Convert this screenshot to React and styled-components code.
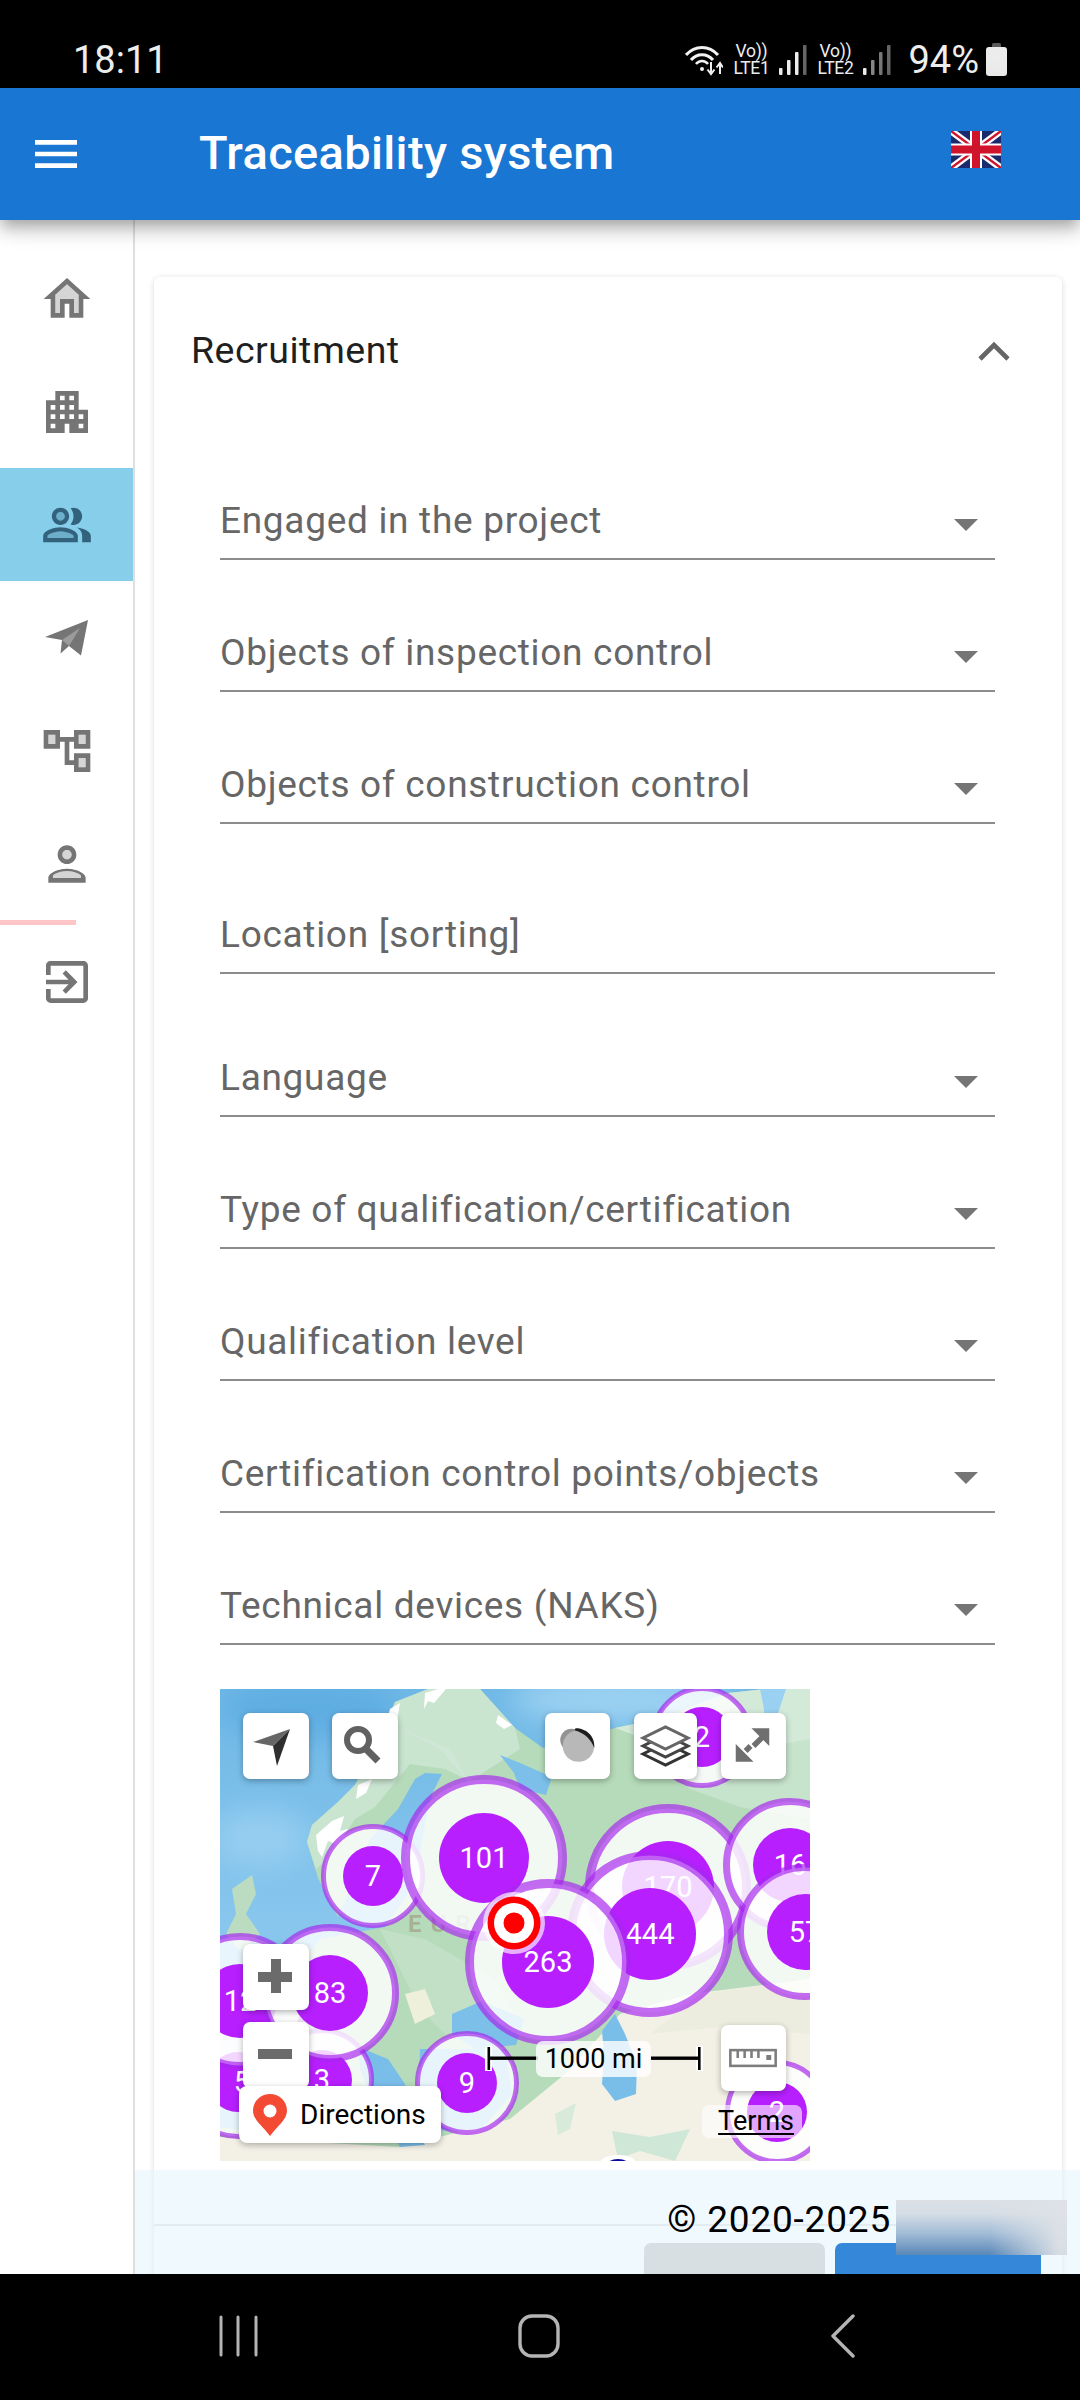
import React from "react";
import styled, { createGlobalStyle } from "styled-components";

const Global = createGlobalStyle`
  html, body { margin: 0; padding: 0; background: #fff; }
  * { box-sizing: border-box; }
  #root { width: 1080px; height: 2400px; }
`;

const Screen = styled.div`
  width: 1080px; height: 2400px; display: flex; flex-direction: column; overflow: hidden;
  font-family: Roboto, "Liberation Sans", sans-serif; background: #fff; color: #000;
`;

/* ---------- status bar ---------- */
const StatusBar = styled.div`
  height: 88px; flex: none; background: #000; color: #eee; display: flex; align-items: center;
  padding: 31px 73px 0 73px;
`;
const Clock = styled.span`font-size: 38px; line-height: 1; margin-right: auto;`;
const StatusGroup = styled.div`display: flex; align-items: center; gap: 9px;`;
const Lte = styled.div`
  display: flex; flex-direction: column; align-items: center; font-size: 17.5px; line-height: 17px; color: #eee; width: 38px;
  letter-spacing: -.3px;
`;
const Percent = styled.span`font-size: 38px; line-height: 1; margin-left: 8px; margin-right: -2px;`;

const Wifi = () => (
  <svg width="38" height="32" viewBox="0 0 38 32" fill="none" stroke="#f2f2f2">
    <path d="M1 11C10 1 24 1 33 11" strokeWidth="3" />
    <path d="M6 16C12 9 22 9 28 16" strokeWidth="3" />
    <path d="M11 20C14 16 20 16 23 20" strokeWidth="2.5" />
    <circle cx="17" cy="25" r="2" fill="#f2f2f2" stroke="none" />
    <path d="M26 18V29M22.5 25.5L26 30L29.5 25.5M35 30V19M31.5 23.5L35 19L38 23.5" strokeWidth="2" />
  </svg>
);
const Signal = ({ colors }) => (
  <svg width="28" height="30" viewBox="0 0 28 30">
    <rect x="0" y="23" width="3.5" height="7" rx="1" fill={colors[0]} />
    <rect x="8" y="15" width="3.5" height="15" rx="1" fill={colors[1]} />
    <rect x="16" y="7" width="3.5" height="23" rx="1" fill={colors[2]} />
    <rect x="24" y="0" width="3.5" height="30" rx="1" fill={colors[3]} />
  </svg>
);
const Battery = () => (
  <svg width="21" height="33" viewBox="0 0 21 33">
    <rect x="6" y="0" width="9" height="6" rx="1.5" fill="#5a5a5a" />
    <rect x="0" y="4" width="21" height="29" rx="3" fill="#ececec" />
  </svg>
);

/* ---------- app bar ---------- */
const AppBar = styled.header`
  height: 132px; flex: none; background: #1976d2; display: flex; align-items: center; color: #fff;
  padding: 0 0 0 28px; position: relative; z-index: 3;
  box-shadow: 0 6px 12px -3px rgba(0,0,0,.2), 0 12px 15px 0 rgba(0,0,0,.14), 0 3px 30px 0 rgba(0,0,0,.12);
`;
const Title = styled.h1`
  margin: -3px 0 0 115px; font-size: 47px; font-weight: 500; line-height: 1; letter-spacing: .34px; flex: 1;
`;
const FlagWrap = styled.div`margin-right: 79px; display: flex; margin-top: -10px;`;

const Flag = () => (
  <svg width="50" height="37" viewBox="0 0 50 37">
    <rect width="50" height="37" fill="#1a2a6c" />
    <path d="M0 0L50 37M50 0L0 37" stroke="#fff" strokeWidth="7" />
    <path d="M0 0L50 37M50 0L0 37" stroke="#cf142b" strokeWidth="2.4" />
    <rect x="19" width="12" height="37" fill="#fff" />
    <rect y="12.5" width="50" height="12" fill="#fff" />
    <rect x="21" width="8" height="37" fill="#cf142b" />
    <rect y="14.5" width="50" height="8" fill="#cf142b" />
  </svg>
);

/* ---------- body ---------- */
const Body = styled.div`flex: 1; display: flex; position: relative; min-height: 0; overflow: hidden;`;
const Sidebar = styled.nav`
  width: 135px; flex: none; border-right: 2px solid #dfdfdf; padding-top: 22px; display: flex; flex-direction: column;
`;
const NavItem = styled.div`
  height: 113px; display: flex; align-items: center; justify-content: center;
  background: ${p => (p.$active ? "#87ceeb" : "transparent")};
  color: ${p => (p.$active ? "#33627d" : "#757575")};
`;
const NavDivider = styled.div`width: 76px; height: 5px; background: #fdc5c5; flex: none;`;
const Main = styled.main`flex: 1; min-width: 0; padding: 57px 18px 0 19px;`;
const Card = styled.section`
  background: #fff; border-radius: 6px; min-height: 2100px;
  box-shadow: 0 3px 3px -2px rgba(0,0,0,.12), 0 1px 6px 0 rgba(0,0,0,.14);
  padding: 0 0 0 66px;
`;
const CardHead = styled.div`
  height: 148px; margin-left: -28px; padding: 0 50px 0 0; display: flex; align-items: center; justify-content: space-between;
`;
const CardTitle = styled.span`font-size: 37.5px; line-height: 1; color: #1f1f1f; letter-spacing: .5px; margin: 0 0 0 -1px;`;
const Fields = styled.div`width: 775px; display: flex; flex-direction: column;`;
const Field = styled.div`
  height: ${p => p.$h}px; flex: none; border-bottom: 2px solid #8c8c8c; display: flex; align-items: flex-end;
  justify-content: space-between; padding: 0 17px 17px 0;
`;
const FieldLabel = styled.span`font-size: 37px; line-height: 40px; color: #666; letter-spacing: .7px;`;
const Caret = styled.span`
  width: 0; height: 0; border-left: 12px solid transparent; border-right: 12px solid transparent;
  border-top: 12px solid #757575; margin-bottom: 10px;
`;

/* ---------- map ---------- */
const MapBox = styled.div`
  width: 590px; height: 472px; margin-top: 44px; position: relative; overflow: hidden; background: #7cc0ea;
`;
const MapSvg = styled.svg`display: block; position: absolute; inset: 0;`;
const MapButton = styled.div`
  position: absolute; left: ${p => p.$x}px; top: ${p => p.$y}px; width: ${p => p.$w || 66}px; height: 66px;
  background: #fff; border-radius: 7px; display: flex; align-items: center; justify-content: center;
  box-shadow: 0 2px 6px rgba(0,0,0,.3);
`;
const Directions = styled.div`
  position: absolute; left: 19px; top: 397px; width: 202px; height: 57px; background: #fff; border-radius: 8px;
  box-shadow: 0 2px 6px rgba(0,0,0,.3); display: flex; align-items: center; gap: 13px; padding-left: 14px;
  font-size: 28px; color: #000;
`;
const ScaleLabel = styled.div`
  position: absolute; left: 316px; top: 352px; width: 115px; height: 36px; background: rgba(255,255,255,.8);
  border-radius: 7px; font-size: 27px; line-height: 36px; text-align: center; color: #000;
`;
const Terms = styled.div`
  position: absolute; left: 482px; top: 416px; width: 100px; height: 33px; background: rgba(255,255,255,.6);
  border-radius: 7px; font-size: 27px; line-height: 33px; text-align: right; padding-right: 8px; color: #000;
  text-decoration: underline; text-underline-offset: 3px;
`;
const CardDivider = styled.div`height: 2px; background: #e4e4e4; margin: 63px 0 0 -66px;`;

/* ---------- footer overlay ---------- */
const Footer = styled.div`
  position: absolute; left: 135px; right: 0; bottom: 0; height: 104px; background: rgba(226,243,252,.5);
  padding: 30px 0 0 0; display: flex; flex-direction: column; align-items: flex-end;
`;
const CopyRow = styled.div`display: flex; height: 43px; gap: 5px; padding-right: 13px; position: relative; z-index: 1;`;
const Copy = styled.span`font-size: 37px; line-height: 40px; letter-spacing: .8px; color: #000;`;
const BlurBox = styled.div`
  width: 171px; height: 55px;
  background: linear-gradient(90deg, rgba(222,226,231,0) 55%, rgba(222,226,231,.95) 95%),
    linear-gradient(180deg, #dadfe5 0%, #d5dde5 25%, #a3bdd7 60%, #5a87b7 100%);
`;
const Buttons = styled.div`display: flex; gap: 10px; padding-right: 39px;`;
const FootButton = styled.div`
  height: 78px; width: ${p => p.$w}px; border-radius: 7px 7px 0 0; background: ${p => p.$bg}; color: ${p => p.$fg};
  font-size: 28px; font-weight: 500; letter-spacing: 2px; text-align: center; line-height: 86px;
`;

/* ---------- nav bar ---------- */
const NavBar = styled.div`
  height: 126px; flex: none; background: #000; display: flex; align-items: center; position: relative; z-index: 4;
  padding: 0 0 2px 219px;
`;
const NavGlyph = styled.span`display: flex; margin-left: ${p => p.$ml || 0}px;`;

const Icon = ({ size = 56, children }) => (
  <svg width={size} height={size} viewBox="0 0 24 24" fill="currentColor">{children}</svg>
);
const HomeI = () => (
  <Icon>
    <path d="m12 5.69 5 4.5V18h-2v-6H9v6H7v-7.81z" opacity=".3" />
    <path d="m12 3-10 9h3v8h6v-6h2v6h6v-8h3zm5 15h-2v-6H9v6H7v-7.81l5-4.5 5 4.5z" />
  </Icon>
);
const ApartmentI = () => (
  <Icon>
    <path d="M17 11V3H7v4H3v14h8v-4h2v4h8V11h-4zM7 19H5v-2h2v2zm0-4H5v-2h2v2zm0-4H5V9h2v2zm4 4H9v-2h2v2zm0-4H9V9h2v2zm0-4H9V5h2v2zm4 8h-2v-2h2v2zm0-4h-2V9h2v2zm0-4h-2V5h2v2zm4 12h-2v-2h2v2zm0-4h-2v-2h2v2z" />
  </Icon>
);
const PeopleI = () => (
  <Icon size={52}>
    <circle cx="9" cy="8" r="2" opacity=".3" />
    <path d="M9 15c-2.7 0-5.8 1.29-6 2.01V18h12v-1c-.2-.71-3.3-2-6-2z" opacity=".3" />
    <path d="M16.67 13.13C18.04 14.06 19 15.32 19 17v3h4v-3c0-2.18-3.57-3.47-6.33-3.87zM15 12c2.21 0 4-1.79 4-4s-1.79-4-4-4c-.47 0-.91.1-1.33.24C14.5 5.27 15 6.58 15 8s-.5 2.73-1.33 3.76c.42.14.86.24 1.33.24zm-6 0c2.21 0 4-1.79 4-4s-1.79-4-4-4-4 1.79-4 4 1.79 4 4 4zm0-6c1.1 0 2 .9 2 2s-.9 2-2 2-2-.9-2-2 .9-2 2-2zm0 7c-2.67 0-8 1.34-8 4v3h16v-3c0-2.66-5.33-4-8-4zm6 5H3v-.99C3.2 16.29 6.3 15 9 15s5.8 1.29 6 2v1z" />
  </Icon>
);
const PlaneI = () => (
  <svg width="46" height="38" viewBox="0 0 46 38" fill="currentColor">
    <path d="M44 1L1 18L18 21L16.5 34.5L25 27L37 36.5Z" />
    <path d="M18 21L36 9L25 27Z" fill="#fff" opacity=".28" />
  </svg>
);
const TreeI = () => (
  <Icon>
    <path d="M7 5v4H4V5h3m13 0v4h-3V5h3m0 10v4h-3v-4h3" opacity=".3" />
    <path d="M22 11V3h-7v3H9V3H2v8h7V8h2v10h4v3h7v-8h-7v3h-2V8h2v3h7zM7 9H4V5h3v4zm10 6h3v4h-3v-4zm0-10h3v4h-3V5z" />
  </Icon>
);
const PersonI = () => (
  <Icon>
    <circle cx="12" cy="8" r="2" opacity=".3" />
    <path d="M12 15c-2.7 0-5.8 1.29-6 2.01V18h12v-1c-.2-.71-3.3-2-6-2z" opacity=".3" />
    <path d="M12 14c-2.67 0-8 1.34-8 4v2h16v-2c0-2.66-5.33-4-8-4zm6 4H6v-.99c.2-.72 3.3-2.01 6-2.01s5.8 1.29 6 2v1zM12 4C9.79 4 8 5.79 8 8s1.79 4 4 4 4-1.79 4-4-1.79-4-4-4zm0 6c-1.1 0-2-.9-2-2s.9-2 2-2 2 .9 2 2-.9 2-2 2z" />
  </Icon>
);
const ExitI = () => (
  <Icon>
    <path d="M10.09 15.59 11.5 17l5-5-5-5-1.41 1.41L12.67 11H3v2h9.67l-2.58 2.59zM19 3H5c-1.11 0-2 .9-2 2v4h2V5h14v14H5v-4H3v4c0 1.1.89 2 2 2h14c1.1 0 2-.9 2-2V5c0-1.1-.9-2-2-2z" />
  </Icon>
);

/* ---------- map drawing ---------- */
const clusters = [
  { l: "5", x: 18, y: 393, r: 30, R: 57, w: 5, tx: 4 },
  { l: "3", x: 102, y: 391, r: 30, R: 52, w: 5, tx: 0 },
  { l: "12", x: 20, y: 312, r: 37, R: 68, w: 7, tx: 0 },
  { l: "83", x: 110, y: 304, r: 38, R: 69, w: 7, tx: 0 },
  { l: "7", x: 153, y: 187, r: 30, R: 52, w: 5, tx: 0 },
  { l: "9", x: 247, y: 394, r: 30, R: 52, w: 5, tx: 0 },
  { l: "2", x: 482, y: 48, r: 30, R: 51, w: 5, tx: 0 },
  { l: "2", x: 557, y: 423, r: 30, R: 52, w: 5, tx: 0 },
  { l: "101", x: 264, y: 169, r: 45, R: 83, w: 9, tx: 0 },
  { l: "170", x: 448, y: 198, r: 46, R: 83, w: 9, tx: 0 },
  { l: "16", x: 570, y: 176, r: 37, R: 67, w: 7, tx: 0 },
  { l: "57", x: 585, y: 243, r: 38, R: 68, w: 7, tx: 0 },
  { l: "444", x: 430, y: 245, r: 46, R: 83, w: 9, tx: 0 },
  { l: "263", x: 328, y: 273, r: 46, R: 83, w: 9, tx: 0 },
];

const Cluster = ({ c }) => (
  <g>
    <circle cx={c.x} cy={c.y} r={c.R - c.w / 2} fill="#fff" fillOpacity=".82" stroke="#a726ee" strokeOpacity=".68" strokeWidth={c.w} />
    <circle cx={c.x} cy={c.y} r={c.r} fill="#b71fff" />
    <text x={c.x + c.tx} y={c.y + 10} textAnchor="middle" fontFamily="Roboto, sans-serif" fontSize="29" fill="#fff">{c.l}</text>
  </g>
);

const MapDrawing = () => (
  <MapSvg width="590" height="472" viewBox="0 0 590 472">
    <defs>
      <linearGradient id="sea" x1="0" y1="0" x2="0" y2="1">
        <stop offset="0" stopColor="#6fb8e6" />
        <stop offset=".5" stopColor="#88c6ed" />
        <stop offset="1" stopColor="#7cbfea" />
      </linearGradient>
      <filter id="soft"><feGaussianBlur stdDeviation=".7" /></filter>
      <filter id="softer"><feGaussianBlur stdDeviation="14" /></filter>
    </defs>
    <rect width="590" height="472" fill="url(#sea)" />
    <g filter="url(#softer)">
      <ellipse cx="90" cy="20" rx="90" ry="30" fill="#5fade2" />
      <ellipse cx="40" cy="150" rx="50" ry="30" fill="#94cdf0" />
      <ellipse cx="400" cy="10" rx="110" ry="24" fill="#9cd2f2" />
    </g>
    <g filter="url(#soft)">
      {/* main land */}
      <path fill="#b6dbba" d="M208,0 L175,13 L160,50 L135,96 L118,113 L92,136 L87,153 L98,189 L118,228 L128,205 L150,150 L178,120 L195,90 L205,84 L222,85 L212,105 L205,135 L195,195 L165,238 L100,250 L70,290 L60,340 L40,380 L0,400 L0,472 L590,472 L590,0 L545,0 L508,4 L442,29 L395,39 L323,59 L295,39 L260,0 Z" />
      {/* lighter northern land */}
      <path fill="#c9e5d0" d="M208,0 L175,13 L160,50 L135,96 L118,113 L92,136 L87,153 L96,180 L112,165 L135,130 L155,118 L190,75 L225,80 L250,92 L300,60 L295,39 L260,0Z" />
      <path fill="#c6e3cc" d="M440,70 L590,44 L590,130 L520,118 L470,100Z" />
      <path fill="#d3ead9" d="M442,29 L508,4 L545,0 L590,0 L590,50 L480,70 L395,39Z" />
      {/* snow */}
      <path fill="#fff" d="M96,146 L112,132 L124,127 L120,142 L128,140 L118,156 L108,152 L102,168 L98,162Z" />
      <path fill="#fff" d="M205,4 L218,0 L226,0 L214,14 L208,12 L204,20Z" />
      <path fill="#fff" d="M170,20 L180,14 L177,32 L170,42 L166,36Z" />
      <path fill="#fff" d="M138,96 L152,90 L146,104 L136,110Z" />
      <path fill="#fff" d="M278,26 L292,36 L284,40 L276,34Z" />
      {/* White sea */}
      <path fill="#7cc0ea" d="M280,66 L300,74 L332,88 L326,106 L300,100 L294,84Z" />
      {/* Ob gulf */}
      <path fill="#9ad0f1" d="M540,0 L566,0 L556,30 L545,40 L544,20Z" />
      {/* UK */}
      <path fill="#bbdcc0" d="M12,200 L32,186 L36,205 L26,225 L40,245 L20,262 L6,245 L16,225Z" />
      {/* south */}
      <path fill="#f3f1e6" d="M590,290 L470,305 L400,325 L345,385 L290,430 L180,458 L0,448 L0,472 L590,472Z" />
      <path fill="#ecedde" d="M590,290 L480,305 L430,345 L500,338 L590,345Z" />
      <path fill="#cfe7d6" d="M392,442 L430,448 L470,440 L455,472 L420,462 L398,470Z" />
      <path fill="#d8ead9" d="M335,425 L356,414 L350,440 L338,446Z" />
      <path fill="#cfe7d6" d="M180,40 L230,60 L250,95 L220,60Z" />
      <path fill="#c9e3cf" d="M160,240 L200,320 L225,345 L300,335 L275,290 L205,250Z" opacity=".6" />
      <path fill="#eef0dc" d="M185,305 L205,300 L215,325 L195,335Z" />
      {/* inland water */}
      <path fill="#79bde9" d="M138,358 L168,370 L185,395 L192,430 L170,428 L150,405 L140,380Z" />
      <path fill="#7cc0ea" d="M232,325 L262,312 L304,330 L296,356 L255,360 L232,345Z" />
      <path fill="#79bde9" d="M382,342 L395,325 L405,345 L417,375 L416,405 L395,412 L382,395 L384,365Z" />
      <path fill="#7cc0ea" d="M170,440 L195,438 L205,456 L180,458Z" />
      <path fill="#7cc0ea" d="M0,405 L40,395 L58,420 L30,442 L0,438Z" />
      <path fill="#7cc0ea" d="M200,360 L285,360 L292,405 L262,440 L215,442 L198,420Z" />
    </g>
    <ellipse cx="398" cy="474" rx="18" ry="8" fill="#fff" />
    <ellipse cx="398" cy="477" rx="12" ry="7" fill="#0a0aa0" />
    <text x="188" y="243" fontFamily="Roboto, sans-serif" fontSize="24" fontWeight="700" letterSpacing="9" fill="#9a8f78" opacity=".55">EUROPE</text>
    {clusters.map(c => <Cluster key={c.l + c.x} c={c} />)}
    {/* target */}
    <circle cx="294" cy="234" r="31" fill="#fff" opacity=".65" />
    <circle cx="294" cy="234" r="26.5" fill="#f00" />
    <circle cx="294" cy="234" r="20" fill="#fff" />
    <circle cx="294" cy="234" r="10.5" fill="#f00" />
    {/* scale bar */}
    <rect x="265" y="357" width="7" height="25" fill="#fff" />
    <rect x="476" y="357" width="7" height="25" fill="#fff" opacity=".9" />
    <rect x="267.5" y="358" width="2.6" height="23" fill="#000" />
    <rect x="478" y="358" width="2.6" height="23" fill="#000" />
    <rect x="268" y="367.5" width="50" height="3.4" fill="#000" />
    <rect x="431" y="367.5" width="48" height="3.4" fill="#000" />
  </MapSvg>
);

const NavArrow = () => (
  <svg width="66" height="66" viewBox="0 0 66 66">
    <path d="M47 16L10 29L30 33Z" fill="#666" />
    <path d="M47 16L30 33L34 53Z" fill="#2f2f2f" />
  </svg>
);
const SearchI = () => (
  <svg width="66" height="66" viewBox="0 0 66 66" fill="none" stroke="#616161">
    <circle cx="26" cy="27" r="11" strokeWidth="6" />
    <path d="M34 36L46 48" strokeWidth="7" />
  </svg>
);
const DarkI = () => (
  <svg width="66" height="66" viewBox="0 0 66 66">
    <circle cx="27" cy="27" r="11.5" fill="#929292" />
    <circle cx="34" cy="33" r="16" fill="#b8b8b8" />
    <path d="M31 15C42 15 51 23 50 35C47 27 41 20 30 17Z" fill="#1d1d1d" />
  </svg>
);
const LayersI = () => (
  <svg width="63" height="66" viewBox="0 0 63 66" fill="none">
    <path d="M9 41L31.5 52L54 41L31.5 30Z" stroke="#333" strokeWidth="3" />
    <path d="M9 33L31.5 44L54 33L31.5 22Z" fill="#fff" stroke="#444" strokeWidth="3" />
    <path d="M9 25L31.5 36L54 25L31.5 14Z" fill="#fff" stroke="#666" strokeWidth="3" />
  </svg>
);
const ExpandI = () => (
  <svg width="66" height="66" viewBox="0 0 66 66" fill="#6f6f6f">
    <path d="M31 15H49V33Z" />
    <path d="M15 31V49H33Z" />
    <path d="M39 22L43 26L34 35L30 31ZM27 31L31 35L26 40L22 36Z" transform="translate(1 0)" />
  </svg>
);
const PlusI = () => (
  <svg width="66" height="66" viewBox="0 0 66 66" fill="#6b6b6b"><path d="M28 15H38V28H49V38H38V49H28V38H15V28H28Z" /></svg>
);
const MinusI = () => (
  <svg width="66" height="66" viewBox="0 0 66 66" fill="#6b6b6b"><rect x="15" y="27" width="34" height="10" /></svg>
);
const RulerI = () => (
  <svg width="66" height="66" viewBox="0 0 66 66" fill="none" stroke="#7d7d7d">
    <rect x="9.5" y="25" width="46" height="16" strokeWidth="2.6" />
    <path d="M17 25V33M24 25V33M31 25V33M38 25V33" strokeWidth="2.6" />
    <rect x="46" y="30" width="5" height="5" fill="#7d7d7d" stroke="none" />
  </svg>
);
const Pin = () => (
  <svg width="34" height="42" viewBox="0 0 34 42">
    <path d="M17 0C7.6 0 0 7.4 0 16.5C0 26 9 31 17 42C25 31 34 26 34 16.5C34 7.4 26.4 0 17 0Z" fill="#f24a33" />
    <circle cx="17" cy="17" r="6.5" fill="#fff" />
  </svg>
);

/* ---------- nav bar glyphs ---------- */
const Recents = () => (
  <svg width="40" height="42" viewBox="0 0 40 42" stroke="#b4b4b4" strokeWidth="3" strokeLinecap="round">
    <path d="M2 2V40M19 2V40M37 2V40" />
  </svg>
);
const HomeGlyph = () => (
  <svg width="42" height="44" viewBox="0 0 42 44" fill="none" stroke="#b4b4b4" strokeWidth="3.4">
    <rect x="2" y="2" width="38" height="40" rx="12" />
  </svg>
);
const BackGlyph = () => (
  <svg width="24" height="44" viewBox="0 0 24 44" fill="none" stroke="#b4b4b4" strokeWidth="3.4" strokeLinecap="round" strokeLinejoin="round">
    <path d="M22 2L2 22L22 42" />
  </svg>
);

const fields = [
  { label: "Engaged in the project", h: 135, caret: true },
  { label: "Objects of inspection control", h: 132, caret: true },
  { label: "Objects of construction control", h: 132, caret: true },
  { label: "Location [sorting]", h: 150, caret: false },
  { label: "Language", h: 143, caret: true },
  { label: "Type of qualification/certification", h: 132, caret: true },
  { label: "Qualification level", h: 132, caret: true },
  { label: "Certification control points/objects", h: 132, caret: true },
  { label: "Technical devices (NAKS)", h: 132, caret: true },
];

export default function App() {
  return (
    <Screen>
      <Global />
      <StatusBar>
        <Clock>18:11</Clock>
        <StatusGroup>
          <Wifi />
          <Lte><span>Vo))</span><span>LTE1</span></Lte>
          <Signal colors={["#eee", "#eee", "#eee", "#666"]} />
          <Lte><span>Vo))</span><span>LTE2</span></Lte>
          <Signal colors={["#eee", "#888", "#777", "#666"]} />
          <Percent>94%</Percent>
          <Battery />
        </StatusGroup>
      </StatusBar>
      <AppBar>
        <Icon size={56}><path d="M3 18h18v-2H3v2zm0-5h18v-2H3v2zm0-7v2h18V6H3z" /></Icon>
        <Title>Traceability system</Title>
        <FlagWrap><Flag /></FlagWrap>
      </AppBar>
      <Body>
        <Sidebar>
          <NavItem><HomeI /></NavItem>
          <NavItem><ApartmentI /></NavItem>
          <NavItem $active><PeopleI /></NavItem>
          <NavItem><PlaneI /></NavItem>
          <NavItem><TreeI /></NavItem>
          <NavItem><PersonI /></NavItem>
          <NavDivider />
          <NavItem><ExitI /></NavItem>
        </Sidebar>
        <Main>
          <Card>
            <CardHead>
              <CardTitle>Recruitment</CardTitle>
              <svg width="36" height="24" viewBox="0 0 36 24" fill="none" stroke="#666" strokeWidth="4.6"><path d="M4 20L18 6L32 20" /></svg>
            </CardHead>
            <Fields>
              {fields.map(f => (
                <Field key={f.label} $h={f.h}>
                  <FieldLabel>{f.label}</FieldLabel>
                  {f.caret && <Caret />}
                </Field>
              ))}
            </Fields>
            <MapBox>
              <MapDrawing />
              <MapButton $x={23} $y={24}><NavArrow /></MapButton>
              <MapButton $x={112} $y={24}><SearchI /></MapButton>
              <MapButton $x={325} $y={24} $w={65}><DarkI /></MapButton>
              <MapButton $x={414} $y={24} $w={63}><LayersI /></MapButton>
              <MapButton $x={501} $y={24} $w={65}><ExpandI /></MapButton>
              <MapButton $x={23} $y={255}><PlusI /></MapButton>
              <MapButton $x={23} $y={333}><MinusI /></MapButton>
              <MapButton $x={501} $y={336} $w={65}><RulerI /></MapButton>
              <Directions><Pin />Directions</Directions>
              <ScaleLabel>1000 mi</ScaleLabel>
              <Terms>Terms</Terms>
            </MapBox>
            <CardDivider />
          </Card>
        </Main>
        <Footer>
          <CopyRow>
            <Copy>© 2020-2025</Copy>
            <BlurBox />
          </CopyRow>
          <Buttons>
            <FootButton $w={181} $bg="#d7dfe2" $fg="#555">CLEAR</FootButton>
            <FootButton $w={206} $bg="#3587da" $fg="#fff">SEARCH</FootButton>
          </Buttons>
        </Footer>
      </Body>
      <NavBar>
        <NavGlyph><Recents /></NavGlyph>
        <NavGlyph $ml={259}><HomeGlyph /></NavGlyph>
        <NavGlyph $ml={271}><BackGlyph /></NavGlyph>
      </NavBar>
    </Screen>
  );
}
